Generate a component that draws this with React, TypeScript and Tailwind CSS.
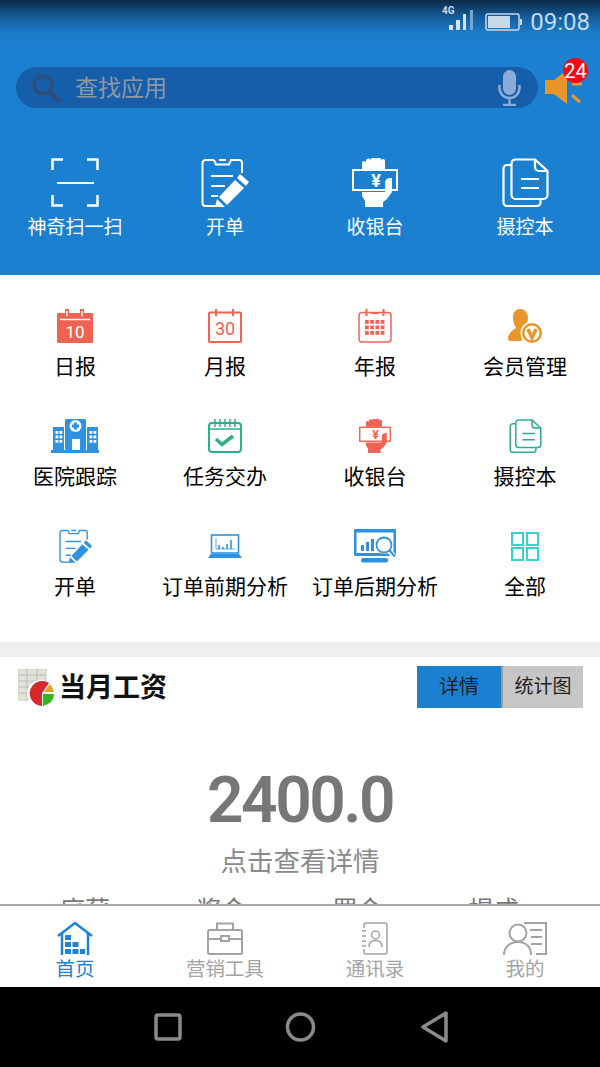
// Mobile workbench home screen
import React from 'react';

type IconProps = { className?: string };

const ScanIcon = ({ className }: IconProps) => (
  <svg viewBox="0 0 48 49" className={className} fill="none" stroke="currentColor" strokeWidth="2.5">
    <path d="M12 1.5H1.5V12M36 1.5H46.5V12M1.5 37V47.5H12M46.5 37V47.5H36" />
    <path d="M6 25H43" strokeWidth="2" />
  </svg>
);

const ClipboardIcon = ({ className }: IconProps) => (
  <svg viewBox="0 0 48 49" className={className} fill="none" stroke="currentColor" strokeWidth="2">
    <path d="M13 2H4.5A3 3 0 0 0 1.5 5V45A3 3 0 0 0 4.5 48H15M13 2L15 6.5H28L30 2H38A3 3 0 0 1 41 5V15" />
    <path d="M18 2H25M10 18H32M10 28H24M10 38H17" />
    <g fill="currentColor" stroke="none">
      <polygon points="39,16 48,24 45,28 36,20" />
      <polygon points="34,22 43,30 26,47 18,39" />
      <polygon points="16,41 24,49 14,49" />
    </g>
  </svg>
);

const HandIcon = ({ className }: IconProps) => (
  <svg viewBox="0 0 46 49" className={className}>
    <path fill="currentColor" d="M10 11V5a2 2 0 0 1 4 0V3a2.500 2.500 0 0 1 5 0V1.500a2.500 2.500 0 0 1 5 0V2a2.500 2.500 0 0 1 5 0V3a2 2 0 0 1 4 0V11z" />
    <rect x="1" y="12" width="44" height="20" fill="none" stroke="currentColor" strokeWidth="2" />
    <path fill="currentColor" d="M10 34H33V24Q34 20 38 20H40V34L35 41L31 44V49H13V43L10 38Z" />
    <text x="24" y="29" textAnchor="middle" fill="currentColor" fontSize="18" fontWeight="700" fontFamily="Roboto, sans-serif">¥</text>
  </svg>
);

const DocIcon = ({ className }: IconProps) => (
  <svg viewBox="0 0 47 49" className={className} fill="none" stroke="currentColor" strokeWidth="2.2">
    <path d="M10 7H5A3.500 3.500 0 0 0 1.500 10.500V44.500A3.500 3.500 0 0 0 5 48H35A3.500 3.500 0 0 0 38.500 44.500V41.500" />
    <path d="M13 1.500H33L45.500 13V37A4 4 0 0 1 41.500 41H13.500A4 4 0 0 1 9.500 37V5A4 4 0 0 1 13 1.500Z" />
    <path d="M33 1.500V9A4 4 0 0 0 37 13H45.500M19 21H37M19 30H37" />
  </svg>
);

const CalendarSolid = ({ className }: IconProps) => (
  <svg viewBox="0 0 36 34" className={className}>
    <path fill="#ee6352" d="M1 4H35A1 1 0 0 1 36 5V33A1 1 0 0 1 35 34H1A1 1 0 0 1 0 33V5A1 1 0 0 1 1 4Z" />
    <path d="M10 0V8M25 0V8" stroke="#ee6352" strokeWidth="4" strokeLinecap="round" />
    <path d="M10 2V7M25 2V7" stroke="#fff" strokeWidth="1.500" />
    <path d="M3 10.500H33" stroke="#fff" strokeWidth="1.500" />
    <text x="18" y="29" textAnchor="middle" fill="#fff" fontSize="17" fontFamily="Roboto, sans-serif">10</text>
  </svg>
);

const CalendarMonth = ({ className }: IconProps) => (
  <svg viewBox="0 0 34 34" className={className} fill="none" stroke="#ee6352">
    <path strokeWidth="2" d="M2 3.500H32A1 1 0 0 1 33 4.500V32A1 1 0 0 1 32 33H2A1 1 0 0 1 1 32V4.500A1 1 0 0 1 2 3.500Z" />
    <path strokeWidth="2" d="M8 0V7M25 0V7" />
    <text x="17" y="26" textAnchor="middle" fill="#ee6352" stroke="none" fontSize="18" fontFamily="Roboto, sans-serif">30</text>
  </svg>
);

const CalendarYear = ({ className }: IconProps) => (
  <svg viewBox="0 0 34 34" className={className} fill="none" stroke="#ee6352">
    <rect x="1" y="3.500" width="32" height="29.500" rx="3" strokeWidth="1.500" />
    <path strokeWidth="2" d="M8.500 0V7M25.500 0V7M13 4H21" />
    <g fill="#ee6352" stroke="none">
      {[11, 16.5, 22].flatMap((y) =>
        [7, 12.2, 17.4, 22.6].map((x) => <rect key={`${x}-${y}`} x={x} y={y} width="3.800" height="3.800" />),
      )}
    </g>
  </svg>
);

const MemberIcon = ({ className }: IconProps) => (
  <svg viewBox="0 0 34 34" className={className}>
    <path fill="#e8962b" d="M12 0C17 0 20 4 20 9C20 13 18 15.500 17 17L21 20L13 32H2A2 2 0 0 1 0 30C0 24 5 21 8 19C6 15.500 5 13 5 8C5 3 8 0 12 0Z" />
    <circle cx="24" cy="24" r="11.500" fill="#fff" />
    <circle cx="24" cy="24" r="10" fill="#e8962b" />
    <circle cx="24" cy="24" r="7.500" fill="#fff" />
    <path d="M20 20L24 29L28 20" fill="none" stroke="#e8962b" strokeWidth="3.500" />
  </svg>
);

const HospitalIcon = ({ className }: IconProps) => (
  <svg viewBox="0 0 48 34" className={className}>
    <rect x="0" y="31" width="48" height="3" fill="#2f92e0" />
    <rect x="2" y="8" width="11" height="23" fill="#2f92e0" />
    <rect x="36" y="8" width="11" height="23" fill="#2f92e0" />
    <rect x="14" y="0" width="21" height="31" rx="1.500" fill="#2f92e0" />
    <rect x="21" y="20" width="8" height="11" fill="#fff" />
    <circle cx="24.500" cy="7" r="6" fill="#fff" />
    <path d="M24.500 3.500V10.500M21 7H28" stroke="#2f92e0" strokeWidth="3" />
    <g fill="#fff">
      {[12, 16.5, 21].flatMap((y) =>
        [4.5, 8.5, 38.5, 42.5].map((x) => <rect key={`${x}-${y}`} x={x} y={y} width="2.800" height="2.800" />),
      )}
    </g>
  </svg>
);

const TaskIcon = ({ className }: IconProps) => (
  <svg viewBox="0 0 34 34" className={className} fill="none" stroke="#2fae8e">
    <rect x="1" y="4" width="32" height="29" rx="3" strokeWidth="2" />
    <path strokeWidth="1.500" d="M7 0V8M12 0V8M17 0V8M22 0V8M27 0V8M1 10H33" />
    <path strokeWidth="3.500" d="M8 20L14 25.500L25 17" />
  </svg>
);

const LaptopIcon = ({ className }: IconProps) => (
  <svg viewBox="0 0 34 24" className={className} fill="none" stroke="#2f92e0">
    <rect x="3.500" y="1" width="27" height="18" strokeWidth="1.600" />
    <path d="M8 4V15H27" strokeWidth="0.800" />
    <path d="M11 11V15M15 13V15M19 10V15M23 6V15" strokeWidth="1.600" />
    <path d="M3 20H31L34 24H0Z" fill="#2f92e0" stroke="none" />
  </svg>
);

const MonitorIcon = ({ className }: IconProps) => (
  <svg viewBox="0 0 42 34" className={className}>
    <path fill="#2f92e0" d="M1 0H41A1 1 0 0 1 42 1V27H1A1 1 0 0 1 0 26V1A1 1 0 0 1 1 0Z" />
    <rect x="2.500" y="3.500" width="37" height="20.500" fill="#fff" />
    <rect x="7" y="16" width="3" height="6" fill="#2f92e0" />
    <rect x="12" y="13" width="3" height="9" fill="#2f92e0" />
    <rect x="17" y="10" width="3" height="12" fill="#2f92e0" />
    <path d="M35 22L41 28" stroke="#fff" strokeWidth="5" />
    <circle cx="30" cy="16" r="9" fill="#fff" />
    <circle cx="30" cy="16" r="7.500" fill="none" stroke="#2f92e0" strokeWidth="1.800" />
    <path d="M35.500 21.500L41 27.500" stroke="#2f92e0" strokeWidth="2" />
    <rect x="7" y="29" width="27" height="4.500" rx="2" fill="#2f92e0" />
  </svg>
);

const GridIcon = ({ className }: IconProps) => (
  <svg viewBox="0 0 28 29" className={className} fill="none" stroke="#3cd0cc" strokeWidth="2">
    <rect x="1" y="1" width="11" height="12" />
    <rect x="16" y="1" width="11" height="12" />
    <rect x="1" y="16" width="11" height="12" />
    <rect x="16" y="16" width="11" height="12" />
  </svg>
);

const SalaryIcon = () => (
  <svg viewBox="0 0 36 37" className="h-[37px] w-[36px] shrink-0">
    <rect x="0" y="0" width="28" height="31" fill="#e2e2da" stroke="#c9c9c2" />
    <path d="M0 6H28M0 12H28M0 18H28M0 24H28M9 0V31M19 0V31" stroke="#bdbdb6" strokeWidth="1" />
    <circle cx="23" cy="25" r="14" fill="#fff" />
    <path d="M24 24L31 14A12.500 12.500 0 1 0 24 37Z" fill="#d8282c" />
    <path d="M26 23L32 15Q35 19 36 23Z" fill="#e2a320" />
    <path d="M25 25H36Q36 34 25 37Z" fill="#35b51d" />
  </svg>
);

const HomeTabIcon = () => (
  <svg viewBox="0 0 36 33" className="h-[33px] w-[36px]" fill="none" stroke="#1f82d6">
    <path strokeWidth="2.500" d="M1 14L18 1L35 14" />
    <path strokeWidth="2.500" d="M5 11V33M31 11V33" />
    <g fill="#1f82d6" stroke="none">
      <rect x="8" y="13" width="6" height="5" />
      <rect x="8" y="20" width="6" height="5" />
      <rect x="15.500" y="20" width="6" height="5" />
      <rect x="8" y="27" width="6" height="5" />
      <rect x="15.500" y="27" width="6" height="5" />
      <rect x="23" y="27" width="5" height="5" />
    </g>
  </svg>
);

const CaseTabIcon = () => (
  <svg viewBox="0 0 36 33" className="h-[33px] w-[36px]" fill="none" stroke="#a3a3a3" strokeWidth="2">
    <rect x="1" y="8" width="34" height="24" rx="1.500" />
    <path d="M10 8V1.500H26V8M1 17H14M22 17H35" />
    <rect x="14" y="14" width="8" height="5" />
  </svg>
);

const ContactsTabIcon = () => (
  <svg viewBox="0 0 26 33" className="h-[33px] w-[26px]" fill="none" stroke="#a3a3a3" strokeWidth="1.500">
    <path d="M2 6V3A2 2 0 0 1 4 1H23A2 2 0 0 1 25 3V30A2 2 0 0 1 23 32H4A2 2 0 0 1 2 30V27" />
    <path d="M0 9H4M0 14H4M0 19H4M0 24H4" />
    <circle cx="13.500" cy="13" r="4" />
    <path d="M7 25C7 20 10 18.500 13.500 18.500S20 20 20 25" />
  </svg>
);

const ProfileTabIcon = () => (
  <svg viewBox="0 0 44 33" className="h-[33px] w-[44px]" fill="none" stroke="#a3a3a3" strokeWidth="2">
    <circle cx="15" cy="11" r="8.500" />
    <path d="M1 33C1 25 7 20 15 20S28 25 28 33" />
    <path d="M21 1H43V32H33M27 8H39M28 15H39M28 22H39" />
  </svg>
);

const actions = [
  { label: '神奇扫一扫', icon: <ScanIcon className="h-[49px] w-[48px]" /> },
  { label: '开单', icon: <ClipboardIcon className="h-[49px] w-[48px]" /> },
  { label: '收银台', icon: <HandIcon className="h-[49px] w-[46px]" /> },
  { label: '摄控本', icon: <DocIcon className="h-[49px] w-[47px]" /> },
];

const apps = [
  { label: '日报', icon: <CalendarSolid className="h-[34px] w-[36px]" /> },
  { label: '月报', icon: <CalendarMonth className="h-[34px] w-[34px]" /> },
  { label: '年报', icon: <CalendarYear className="h-[34px] w-[34px]" /> },
  { label: '会员管理', icon: <MemberIcon className="h-[34px] w-[34px]" /> },
  { label: '医院跟踪', icon: <HospitalIcon className="h-[34px] w-[48px]" /> },
  { label: '任务交办', icon: <TaskIcon className="h-[34px] w-[34px]" /> },
  { label: '收银台', icon: <HandIcon className="h-[34px] w-[32px] text-[#ee6352]" /> },
  { label: '摄控本', icon: <DocIcon className="h-[34px] w-[33px] text-[#2fae8e]" /> },
  { label: '开单', icon: <ClipboardIcon className="h-[34px] w-[33px] text-[#2f92e0]" /> },
  { label: '订单前期分析', icon: <LaptopIcon className="h-[24px] w-[34px]" /> },
  { label: '订单后期分析', icon: <MonitorIcon className="h-[34px] w-[42px]" /> },
  { label: '全部', icon: <GridIcon className="h-[29px] w-[28px]" /> },
];

const tabs = [
  { label: '首页', icon: <HomeTabIcon />, active: true },
  { label: '营销工具', icon: <CaseTabIcon />, active: false },
  { label: '通讯录', icon: <ContactsTabIcon />, active: false },
  { label: '我的', icon: <ProfileTabIcon />, active: false },
];

export default function App() {
  return (
    <div className="flex h-[1067px] w-[600px] flex-col overflow-hidden bg-white font-['Roboto','Noto_Sans_CJK_SC',sans-serif]">
      <div className="flex h-[904px] flex-col overflow-hidden">
        {/* Blue header */}
        <div className="h-[275px] shrink-0 bg-[#1c80d0] bg-[linear-gradient(180deg,#0b2a47_0px,#155f9f_18px,#1b7ac8_32px,#1c80d0_46px)]">
          <div className="flex h-[42px] items-start justify-end pr-[10px] pt-[5px]">
            <svg viewBox="0 0 32 26" className="mr-[11px] h-[26px] w-[32px]">
              <text x="0" y="9" fill="#c6d9ea" fontSize="10" fontWeight="700" fontFamily="Roboto, sans-serif">4G</text>
              <rect x="7" y="20" width="4" height="5" fill="#d7e4ef" />
              <rect x="14" y="15" width="4" height="10" fill="#d7e4ef" />
              <rect x="21" y="9" width="3" height="16" fill="#d7e4ef" />
              <rect x="28" y="5" width="3" height="20" fill="#6ea6d4" />
            </svg>
            <svg viewBox="0 0 37 18" className="mr-[8px] mt-[8px] h-[18px] w-[37px]">
              <rect x="1" y="1" width="33" height="16" rx="2" fill="none" stroke="#c6d9ea" strokeWidth="1.500" />
              <rect x="3" y="3" width="22" height="12" fill="#c6d9ea" />
              <rect x="35" y="6" width="2" height="6" fill="#c6d9ea" />
            </svg>
            <span className="mt-[2px] text-[24px] leading-[30px] text-[#c6d9ea]">09:08</span>
          </div>

          <div className="ml-[16px] mt-[25px] flex items-center">
            <div className="flex h-[41px] w-[522px] items-center rounded-full bg-[#165ea9] pl-[15px] pr-[17px]">
              <svg viewBox="0 0 30 30" className="h-[30px] w-[30px] shrink-0" fill="none" stroke="#2f4f7a">
                <circle cx="12" cy="12" r="9" strokeWidth="3.500" />
                <path d="M19 19L27 27" strokeWidth="4.500" strokeLinecap="round" />
              </svg>
              <span className="ml-[14px] mt-[2px] flex-1 text-[23px] leading-[30px] text-[#8e98a4]">查找应用</span>
              <svg viewBox="0 0 23 36" className="h-[36px] w-[23px]" fill="none" stroke="#8cacd8">
                <rect x="5" y="0" width="13" height="25" rx="6.500" fill="#8cacd8" stroke="none" />
                <path d="M1.500 15V18A10 10 0 0 0 21.500 18V15M11.500 28V34M5 35H18" strokeWidth="2.500" />
              </svg>
            </div>
            <div className="relative ml-[7px] h-[41px] w-[42px]">
              <svg viewBox="0 0 40 36" className="absolute left-0 top-[2px] h-[36px] w-[40px]">
                <path fill="#e8962b" d="M0 11H9L22 1V35L9 25H0Z" />
                <path d="M27 15H37M27 26L35 33" stroke="#e8962b" strokeWidth="3" />
              </svg>
              <div className="absolute left-[18px] top-[-9px] flex h-[25px] w-[25px] items-center justify-center rounded-full bg-[#f50a14] text-[20px] leading-none text-white">
                24
              </div>
            </div>
          </div>

          <div className="mt-[50px] grid grid-cols-4">
            {actions.map((item) => (
              <div key={item.label} className="flex flex-col items-center text-white">
                <div className="flex h-[49px] items-center justify-center">{item.icon}</div>
                <span className="mt-[9px] text-[19px] leading-[24px]">{item.label}</span>
              </div>
            ))}
          </div>
        </div>

        {/* App grid */}
        <div className="grid h-[367px] shrink-0 grid-cols-4 content-start gap-y-[39px] pt-[34px]">
          {apps.map((item) => (
            <div key={item.label} className="flex flex-col items-center">
              <div className="flex h-[34px] shrink-0 items-center justify-center">{item.icon}</div>
              <span className="mt-[11px] whitespace-nowrap text-[21px] leading-[26px] text-black">{item.label}</span>
            </div>
          ))}
        </div>

        <div className="h-[15px] shrink-0 bg-[#efefef]" />

        {/* Salary card */}
        <div className="flex h-[60px] shrink-0 items-start pl-[18px] pr-[17px] pt-[9px]">
          <div className="mt-[3px]">
            <SalaryIcon />
          </div>
          <h2 className="ml-[5px] mt-[6px] flex-1 text-[27px] font-bold leading-[32px] text-[#111]">当月工资</h2>
          <div className="flex h-[42px] text-[19px] leading-[42px] text-[#222]">
            <div className="w-[84px] bg-[#1c80d0] text-center text-[20px]">详情</div>
            <div className="w-[82px] border-l-2 border-[#999] bg-[#c6c6c6] text-center">统计图</div>
          </div>
        </div>
        <div className="mt-[46px] shrink-0 text-center text-[64px] font-semibold leading-[76px] tracking-[-2.500px] text-[#777]">2400.0</div>
        <div className="mt-[5px] shrink-0 text-center text-[26.500px] leading-[36px] text-[#8a8a8a]">点击查看详情</div>
        <div className="mt-[16px] grid shrink-0 grid-cols-4 pl-[17px] pr-[38px] text-center text-[25px] leading-[30px] text-[#777]">
          <span>底薪</span>
          <span>奖金</span>
          <span>罚金</span>
          <span>提成</span>
        </div>
      </div>

      {/* Bottom tabs */}
      <div className="grid h-[83px] shrink-0 grid-cols-4 border-t-2 border-[#aaaaaa] bg-white pt-[16px]">
        {tabs.map((tab) => (
          <div key={tab.label} className={`flex flex-col items-center ${tab.active ? 'text-[#1f82d6]' : 'text-[#a3a3a3]'}`}>
            <div className="flex h-[33px] items-center justify-center">{tab.icon}</div>
            <span className="mt-[3px] text-[19.500px] leading-[24px]">{tab.label}</span>
          </div>
        ))}
      </div>

      {/* Android nav */}
      <div className="flex flex-1 items-center bg-black">
        <svg viewBox="0 0 600 80" className="h-[80px] w-[600px]" fill="none" stroke="#8a8a8a" strokeWidth="3.500" strokeLinejoin="round">
          <rect x="156" y="28" width="24" height="24" rx="2" />
          <circle cx="300.500" cy="40" r="13" />
          <path d="M446 26V54L423 40Z" />
        </svg>
      </div>
    </div>
  );
}
